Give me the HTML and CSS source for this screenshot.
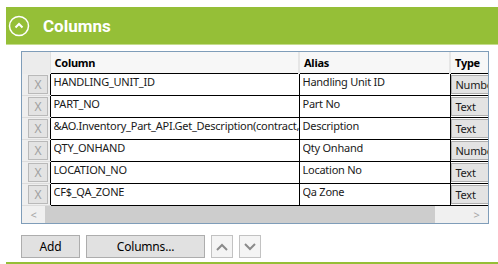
FILE: index.html
```html
<!DOCTYPE html>
<html lang="en">
<head>
    <meta charset="UTF-8">
    <title>Columns</title>
    <link rel="stylesheet" href="styles.css">
</head>
<body>
    <div class="section-header">
        <svg class="collapse-icon" width="22" height="22" viewBox="0 0 22 22">
            <circle cx="11" cy="11" r="9.5" fill="none" stroke="#ffffff" stroke-width="1.5"/>
            <path d="M7.5 12.5 L11 9 L14.5 12.5" fill="none" stroke="#ffffff" stroke-width="2"/>
        </svg>
        <h1>Columns</h1>
    </div>

    <div class="grid">
        <div class="grid-body">
            <table class="columns-table">
                <colgroup>
                    <col class="w-head">
                    <col class="w-name">
                    <col class="w-alias">
                    <col class="w-type">
                </colgroup>
                <thead>
                    <tr>
                        <th class="row-head"></th>
                        <th>Column</th>
                        <th>Alias</th>
                        <th>Type</th>
                    </tr>
                </thead>
                <tbody>
                    <tr>
                        <td class="row-head"><span class="del-btn">X</span></td>
                        <td><div class="cell-text">HANDLING_UNIT_ID</div></td>
                        <td><div class="cell-text">Handling Unit ID</div></td>
                        <td class="type-cell"><span class="type-btn">Number</span></td>
                    </tr>
                    <tr>
                        <td class="row-head"><span class="del-btn">X</span></td>
                        <td><div class="cell-text">PART_NO</div></td>
                        <td><div class="cell-text">Part No</div></td>
                        <td class="type-cell"><span class="type-btn">Text</span></td>
                    </tr>
                    <tr>
                        <td class="row-head"><span class="del-btn">X</span></td>
                        <td><div class="cell-text">&amp;AO.Inventory_Part_API.Get_Description(contract,</div></td>
                        <td><div class="cell-text">Description</div></td>
                        <td class="type-cell"><span class="type-btn">Text</span></td>
                    </tr>
                    <tr>
                        <td class="row-head"><span class="del-btn">X</span></td>
                        <td><div class="cell-text">QTY_ONHAND</div></td>
                        <td><div class="cell-text">Qty Onhand</div></td>
                        <td class="type-cell"><span class="type-btn">Number</span></td>
                    </tr>
                    <tr>
                        <td class="row-head"><span class="del-btn">X</span></td>
                        <td><div class="cell-text">LOCATION_NO</div></td>
                        <td><div class="cell-text">Location No</div></td>
                        <td class="type-cell"><span class="type-btn">Text</span></td>
                    </tr>
                    <tr>
                        <td class="row-head"><span class="del-btn">X</span></td>
                        <td><div class="cell-text">CF$_QA_ZONE</div></td>
                        <td><div class="cell-text">Qa Zone</div></td>
                        <td class="type-cell"><span class="type-btn">Text</span></td>
                    </tr>
                </tbody>
            </table>
        </div>
        <div class="hscroll">
            <span class="scroll-arrow">&lt;</span>
            <span class="scroll-thumb"></span>
            <span class="scroll-track"></span>
            <span class="scroll-arrow">&gt;</span>
        </div>
    </div>

    <div class="toolbar">
        <button class="btn btn-add">Add</button>
        <button class="btn btn-columns">Columns...</button>
        <button class="arrow-btn">
            <svg width="12" height="8" viewBox="0 0 12 8"><path d="M1 7 L6 2 L11 7" fill="none" stroke="#8a8a8a" stroke-width="2"/></svg>
        </button>
        <button class="arrow-btn">
            <svg width="12" height="8" viewBox="0 0 12 8"><path d="M1 1 L6 6 L11 1" fill="none" stroke="#8a8a8a" stroke-width="2"/></svg>
        </button>
    </div>

    <div class="section-footer"></div>
</body>
</html>
```

FILE: styles.css
```css
body {
    margin: 0;
    padding-top: 7px;
    font-family: "Noto Sans", "Open Sans", sans-serif;
    font-size: 11px;
    letter-spacing: -0.25px;
    color: #000000;
    background-color: #ffffff;
}
.section-header {
    margin-left: 6px;
    height: 37px;
    background-color: #95bf37;
    border-bottom: 1px solid #c4dc8c;
    display: flex;
    align-items: center;
}
.collapse-icon {
    margin-left: 2px;
}
h1 {
    margin: 0 0 0 13px;
    font-family: Roboto, sans-serif;
    font-weight: bold;
    font-size: 17px;
    color: #ffffff;
    letter-spacing: 0;
}
.grid {
    margin: 6px 0 0 21px;
    width: 466px;
    border: 1px solid #7f9db9;
    overflow: hidden;
}
.grid-body {
    overflow: hidden;
}
.columns-table {
    border-collapse: collapse;
    table-layout: fixed;
    width: 518px;
}
.w-head {
    width: 28px;
}
.w-name {
    width: 249px;
}
.w-alias {
    width: 151px;
}
.w-type {
    width: 90px;
}
.columns-table th {
    height: 21px;
    padding: 0 0 0 4px;
    text-align: left;
    font-weight: bold;
    background-color: #f7f7f7;
    border-right: 2px solid #e6e6e6;
    vertical-align: middle;
}
.columns-table th.row-head {
    background-color: #ececec;
    border-right: 1px solid #e0e0e0;
}
.columns-table td {
    height: 20px;
    padding: 0 0 0 3px;
    border: 1px solid #000000;
    vertical-align: top;
    line-height: 16px;
    color: #1a1a1a;
}
.cell-text {
    white-space: nowrap;
    overflow: hidden;
}
.columns-table td.row-head {
    background-color: #efefef;
    border: none;
    border-bottom: 1px solid #dcdcdc;
    border-right: 1px solid #000000;
    padding: 1px 0 0 6px;
}
.columns-table td.type-cell {
    padding: 1px 0 0 0;
    border-right: none;
}
.del-btn {
    display: block;
    width: 20px;
    height: 19px;
    box-sizing: border-box;
    background-color: #e3e3e3;
    border: 1px solid #b9b9b9;
    color: #a0a0a0;
    text-align: center;
    line-height: 17px;
    font-size: 12px;
}
.type-btn {
    display: block;
    height: 19px;
    box-sizing: border-box;
    background-color: #e3e3e3;
    border: 1px solid #adadad;
    padding-left: 4px;
    line-height: 17px;
}
.hscroll {
    display: flex;
    height: 17px;
    background-color: #f0f0f0;
    color: #a6a6a6;
}
.scroll-arrow {
    width: 23px;
    text-align: center;
    line-height: 17px;
    font-size: 11px;
}
.scroll-thumb {
    width: 390px;
    background-color: #cdcdcd;
}
.scroll-track {
    flex: 1;
}
.toolbar {
    display: flex;
    gap: 6px;
    margin: 11px 0 0 21px;
}
.btn {
    height: 23px;
    background-color: #e1e1e1;
    border: 1px solid #adadad;
    font-family: "Noto Sans", "Open Sans", sans-serif;
    font-size: 12px;
    letter-spacing: -0.2px;
    color: #000000;
    padding: 0;
}
.btn-add {
    width: 59px;
}
.btn-columns {
    width: 119px;
}
.arrow-btn {
    width: 22px;
    height: 23px;
    padding: 0;
    background-color: #f4f4f4;
    border: 1px solid #c2c2c2;
    display: flex;
    align-items: center;
    justify-content: center;
}
.section-footer {
    margin: 4px 0 0 6px;
    height: 3px;
    background-color: #95bf37;
}
```
